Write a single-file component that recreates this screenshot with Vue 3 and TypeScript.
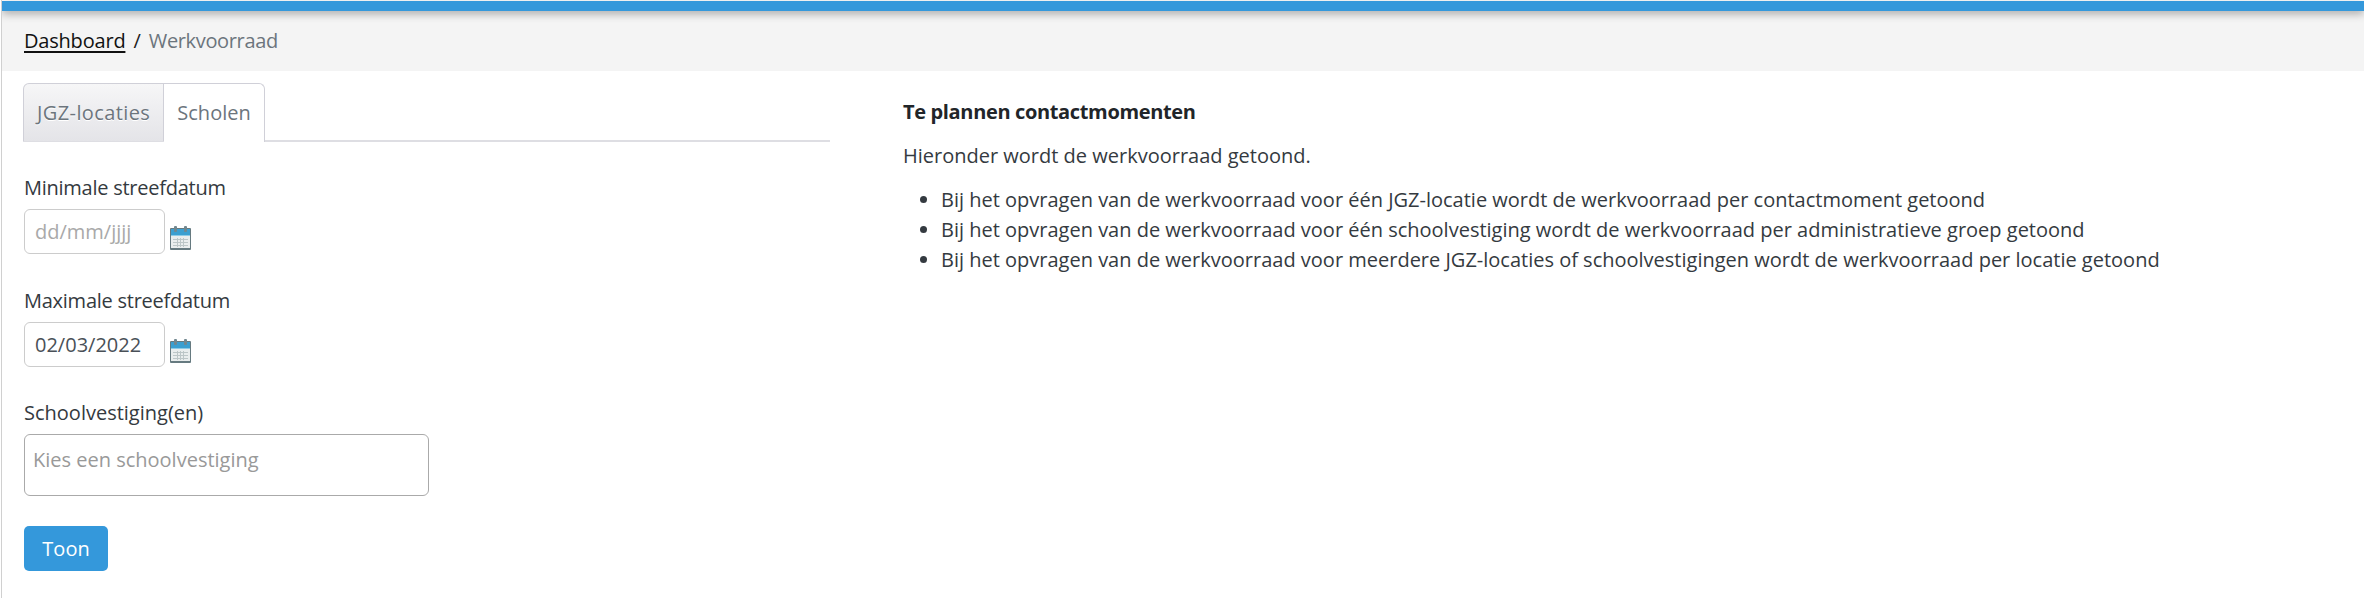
<script setup lang="ts">
import { ref } from "vue";

const activeTab = ref("Scholen");
const tabs = ["JGZ-locaties", "Scholen"];

const bullets = [
  "Bij het opvragen van de werkvoorraad voor één JGZ-locatie wordt de werkvoorraad per contactmoment getoond",
  "Bij het opvragen van de werkvoorraad voor één schoolvestiging wordt de werkvoorraad per administratieve groep getoond",
  "Bij het opvragen van de werkvoorraad voor meerdere JGZ-locaties of schoolvestigingen wordt de werkvoorraad per locatie getoond",
];

const dates = [
  { label: "Minimale streefdatum", value: "", placeholder: "dd/mm/jjjj" },
  { label: "Maximale streefdatum", value: "02/03/2022", placeholder: "dd/mm/jjjj" },
];
</script>

<template>
  <div class="page">
    <div class="topbar"></div>
    <nav class="crumbs">
      <a href="#" class="crumb-link">Dashboard</a>
      <span class="crumb-sep">/</span>
      <span class="crumb-current">Werkvoorraad</span>
    </nav>
    <main class="content">
      <section class="left">
        <div class="tabs">
          <button
            v-for="tab in tabs"
            :key="tab"
            class="tab"
            :class="{ active: tab === activeTab }"
            @click="activeTab = tab"
          >{{ tab }}</button>
        </div>
        <div v-for="d in dates" :key="d.label" class="field date-field">
          <label class="label">{{ d.label }}</label>
          <div class="date-row">
            <input class="date-input" type="text" :value="d.value" :placeholder="d.placeholder" />
            <svg class="cal" width="21" height="24" viewBox="0 0 21 24">
              <rect x="0" y="2" width="21" height="22" rx="1" fill="#667a80" />
              <rect x="1" y="3" width="19" height="7" fill="#3b9fd0" />
              <rect x="1" y="9" width="19" height="1" fill="#8ccbe6" />
              <rect x="1" y="10" width="19" height="12" fill="#e9eded" />
              <path d="M3 13.5h15M3 16.5h15M3 19.5h15M7.5 12v9M10.5 12v9M13.5 12v9" stroke="#bcc6c7" stroke-width="1" fill="none" />
              <rect x="4" y="0" width="3" height="6" rx="1" fill="#71878f" />
              <rect x="14" y="0" width="3" height="6" rx="1" fill="#71878f" />
            </svg>
          </div>
        </div>
        <div class="field select-field">
          <label class="label">Schoolvestiging(en)</label>
          <div class="select-box">Kies een schoolvestiging</div>
        </div>
        <button class="btn">Toon</button>
      </section>
      <section class="right">
        <p class="title">Te plannen contactmomenten</p>
        <p class="intro">Hieronder wordt de werkvoorraad getoond.</p>
        <ul class="list">
          <li v-for="b in bullets" :key="b">{{ b }}</li>
        </ul>
      </section>
    </main>
  </div>
</template>

<style>
html, body {
  margin: 0;
  background: #fff;
}
</style>

<style scoped>
.page {
  height: 598px;
  box-sizing: border-box;
  padding-top: 1px;
  margin: 0 1px;
  border-left: 1px solid #d0d0d0;
  font-family: "Open Sans", "Noto Sans", sans-serif;
  font-size: 20px;
  line-height: 30px;
  color: #343a40;
  overflow: hidden;
}
.topbar {
  height: 10px;
  background: #3498db;
  box-shadow: 0 3px 8px rgba(0, 0, 0, 0.3);
  position: relative;
}
.crumbs {
  height: 60px;
  background: #f4f4f4;
  display: flex;
  align-items: center;
  gap: 8px;
  padding-left: 22px;
}
.crumb-link {
  color: #111;
  letter-spacing: -0.2px;
  text-decoration-thickness: 2px;
  text-underline-offset: 3px;
}
.crumb-sep {
  color: #222;
}
.crumb-current {
  color: #6c757d;
  letter-spacing: -0.35px;
}
.content {
  display: flex;
  padding: 12px 22px 0;
}
.left {
  width: 806px;
  flex: none;
}
.right {
  margin-left: 73px;
  padding-top: 14px;
}
.tabs {
  display: flex;
  height: 59px;
  box-sizing: border-box;
  margin-left: -1px;
  border-bottom: 2px solid #dedee3;
  margin-bottom: 31px;
}
.tab {
  font: inherit;
  color: #6c757d;
  padding: 0 13px;
  background: linear-gradient(#f6f6f7, #e4e4e8);
  border: 1px solid #d0d0d8;
  border-bottom: 0;
  border-radius: 6px 0 0 0;
  height: 58px;
  letter-spacing: 0.4px;
  text-shadow: 0 1px 0 #fff;
}
.tab.active {
  background: #fff;
  border-left: 0;
  border-radius: 0 6px 0 0;
  height: 59px;
  letter-spacing: 0;
  text-shadow: none;
}
.field {
  margin-bottom: 30px;
}
.date-field {
  margin-bottom: 32px;
}
.date-field .label {
  letter-spacing: -0.25px;
}
.select-field {
  margin-top: -1px;
}
.label {
  display: block;
  margin-bottom: 6px;
}
.date-row {
  display: flex;
  align-items: flex-end;
  gap: 5px;
}
.date-input {
  width: 141px;
  height: 45px;
  box-sizing: border-box;
  border: 1px solid #ccc;
  border-radius: 6px;
  padding: 0 10px;
  font: inherit;
  color: #495057;
  outline: none;
}
.date-input::placeholder {
  color: #a9a9a9;
}
.cal {
  margin-bottom: 4px;
}
.select-box {
  width: 405px;
  height: 62px;
  box-sizing: border-box;
  border: 1px solid #aaa;
  border-radius: 6px;
  padding: 10px 8px;
  color: #999;
}
.btn {
  font: inherit;
  width: 84px;
  height: 45px;
  background: #3498db;
  color: #fff;
  border: 0;
  border-radius: 5px;
}
.title {
  margin: 0 0 14px;
  font-weight: 700;
  color: #212529;
  letter-spacing: -0.35px;
}
.intro {
  margin: 0 0 14px;
}
.list {
  margin: 0;
  padding-left: 38px;
}
</style>
